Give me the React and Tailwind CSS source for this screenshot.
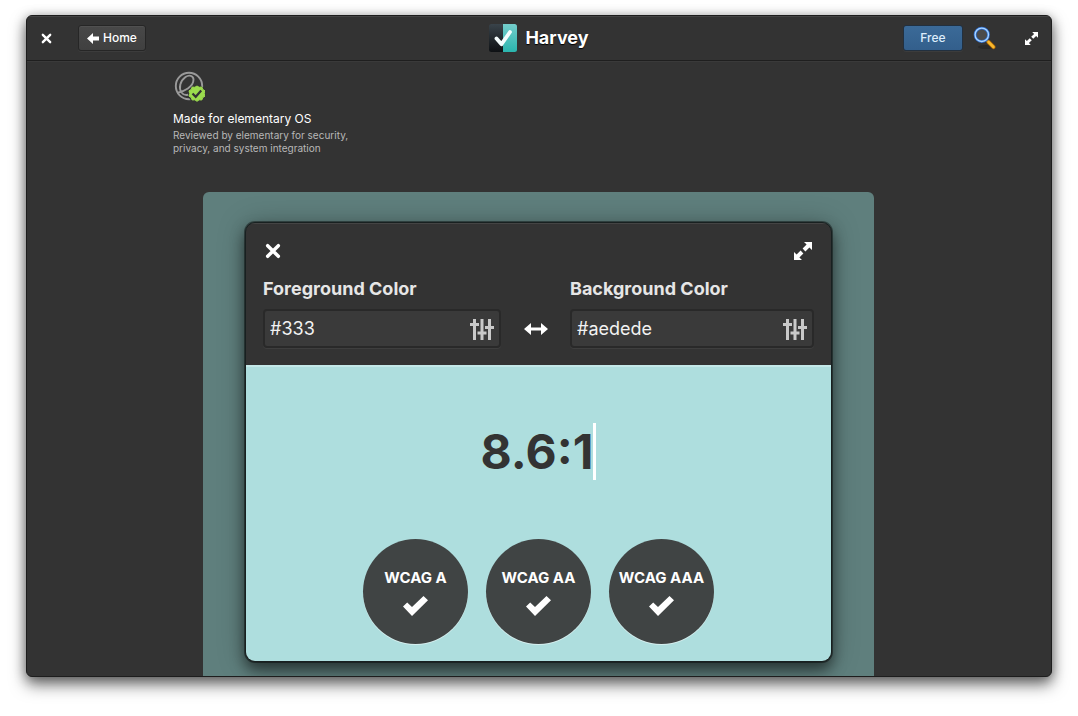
import clsx from 'clsx';

const LEVELS = ['WCAG A', 'WCAG AA', 'WCAG AAA'];

function CloseIcon({ className }) {
  return (
    <svg viewBox="0 0 12 12" className={className} aria-hidden="true">
      <path d="M2 2l8 8M10 2l-8 8" fill="none" stroke="currentColor" strokeWidth="2.6" strokeLinecap="round" />
    </svg>
  );
}

function ExpandIcon({ className }) {
  return (
    <svg viewBox="0 0 18 18" className={className} fill="currentColor" aria-hidden="true">
      <path d="M10 0h8v8l-2.6-2.6-4 4-2.8-2.8 4-4z" />
      <path d="M0 10v8h8l-2.6-2.6 4-4-2.8-2.8-4 4z" />
    </svg>
  );
}

function BackIcon() {
  return (
    <svg viewBox="0 0 12 11" className="h-[11px] w-3" fill="currentColor" aria-hidden="true">
      <path d="M0 5.5L6 0v3.5h6v4H6V11z" />
    </svg>
  );
}

function SwapIcon() {
  return (
    <svg viewBox="0 0 24 12" className="h-3 w-6" fill="currentColor" aria-hidden="true">
      <path d="M0 6l7-6v4.5h10V0l7 6-7 6V7.5H7V12z" />
    </svg>
  );
}

function SlidersIcon() {
  return (
    <svg viewBox="0 0 24 22" className="h-[22px] w-6" fill="currentColor" aria-hidden="true">
      <path d="M3 1h3v4h3v3H6v14H3V8H0V5h3z" />
      <path d="M10.500 1h3v12.500h3v3h-3V22h-3v-5.500h-3v-3h3z" />
      <path d="M18 1h3v7h3v3h-3v11h-3V11h-3V8h3z" />
    </svg>
  );
}

function CheckIcon() {
  return (
    <svg viewBox="0 0 25 20" className="h-5 w-[25px]" fill="currentColor" aria-hidden="true">
      <path d="M0 10.500L4.200 6.400 9 11 20.500 0 25 4.300 9 20z" />
    </svg>
  );
}

function HarveyLogo() {
  return (
    <svg viewBox="0 0 28 28" className="size-7" aria-hidden="true">
      <defs>
        <linearGradient id="logo-dark" x2="0" y2="1">
          <stop offset="0" stopColor="#39434a" />
          <stop offset="1" stopColor="#0e1114" />
        </linearGradient>
        <linearGradient id="logo-teal" x2="0" y2="1">
          <stop offset="0" stopColor="#74cdcb" />
          <stop offset="1" stopColor="#2ab5ae" />
        </linearGradient>
      </defs>
      <path d="M2.500 0H14v28H2.500A2.500 2.500 0 0 1 0 25.500v-23A2.500 2.500 0 0 1 2.500 0z" fill="url(#logo-dark)" />
      <path d="M14 0h11.500A2.500 2.500 0 0 1 28 2.500v23a2.500 2.500 0 0 1-2.500 2.500H14z" fill="url(#logo-teal)" />
      <path d="M7.500 14.500l5 5.700L21 8" fill="none" stroke="#f4fdfd" strokeWidth="3.800" strokeLinecap="round" strokeLinejoin="round" />
    </svg>
  );
}

function SearchIcon() {
  return (
    <svg viewBox="0 0 24 24" className="size-6" aria-hidden="true">
      <ellipse cx="13" cy="21" rx="8" ry="2" fill="#292929" />
      <path d="M13.500 14l2.500 2.500" stroke="#c8c8c8" strokeWidth="2" />
      <path d="M15.500 16l5 5" stroke="#a8660a" strokeWidth="4.200" strokeLinecap="round" />
      <path d="M15.500 16l5 5" stroke="#fbb92c" strokeWidth="2.600" strokeLinecap="round" />
      <circle cx="8.800" cy="8.800" r="6.700" fill="#4b4b4b" stroke="#2f6ed0" strokeWidth="2.800" />
      <circle cx="8.800" cy="8.800" r="6.700" fill="none" stroke="#a9d5ff" strokeWidth="1.300" />
    </svg>
  );
}

function VerifiedIcon() {
  return (
    <svg viewBox="0 0 32 32" className="size-8" fill="none" aria-hidden="true">
      <circle cx="16" cy="15" r="13.200" stroke="#999" strokeWidth="1.900" />
      <path
        d="M4 22C11 20.500 20.500 16 20.500 8.500c0-4-4.500-5-8-2.500C7 10 5.500 17 8.500 21.500c3 4 8 3 12-1"
        stroke="#999"
        strokeWidth="1.900"
      />
      <circle cx="24" cy="23" r="9" fill="#333" />
      <path
        d="M24 15l2.200 1.300 2.600-.3 1 2.400 2.200 1.500-.7 2.600.7 2.600-2.200 1.500-1 2.400-2.600-.2L24 30.300l-2.200-1.500-2.600.2-1-2.400-2.200-1.500.7-2.600-.7-2.600 2.200-1.500 1-2.400 2.600.3z"
        fill="#9bdb4d"
        stroke="#9bdb4d"
        strokeLinejoin="round"
      />
      <path d="M19.500 22.500l3.200 3.300 5.500-6.300" stroke="#333" strokeWidth="2.200" />
    </svg>
  );
}

function Header() {
  return (
    <header className="grid h-[45px] shrink-0 grid-cols-[1fr_auto_1fr] items-center border-b border-[#1f1f1f] px-3 text-white shadow-[inset_0_1px_0_#444,0_1px_0_#3a3a3a]">
      <div className="flex items-center gap-6">
        <button type="button" aria-label="Close" className="px-0.5">
          <CloseIcon className="size-[11px]" />
        </button>
        <button
          type="button"
          className="flex h-[26px] items-center gap-1 rounded-[3px] border border-[#262626] bg-linear-to-b from-[#484848] to-[#404040] px-2 text-xs font-medium shadow-[inset_0_1px_0_#505050,0_1px_0_#3c3c3c]"
        >
          <BackIcon />
          Home
        </button>
      </div>
      <div className="flex items-center gap-2">
        <HarveyLogo />
        <h1 className="text-lg font-bold text-shadow-[0_1px_1px_#000]">Harvey</h1>
      </div>
      <div className="flex items-center justify-end">
        <button
          type="button"
          className="h-[26px] w-[60px] rounded-[3px] border border-[#22303f] bg-linear-to-b from-[#3b6a98] to-[#335f8c] text-xs font-medium text-[#dcecfb] shadow-[0_1px_0_#3c3c3c]"
        >
          Free
        </button>
        <button type="button" aria-label="Search" className="mr-7 ml-2.5">
          <SearchIcon />
        </button>
        <button type="button" aria-label="Maximize" className="mr-px">
          <ExpandIcon className="size-[13px]" />
        </button>
      </div>
    </header>
  );
}

function ColorField({ id, label, value, className }) {
  return (
    <div className={clsx('min-w-0', className)}>
      <label htmlFor={id} className="block text-lg leading-6 font-bold text-[#e6e6e6]">
        {label}
      </label>
      <div className="mt-2 flex h-[39px] items-center rounded border-2 border-[#292929] bg-[#3a3a3a] px-[5px] shadow-[0_1px_0_#3e3e3e]">
        <input
          id={id}
          type="text"
          defaultValue={value}
          className="min-w-0 flex-1 bg-transparent text-lg leading-6 text-[#f2f2f2] outline-none"
        />
        <button type="button" aria-label={`Pick ${label}`} className="text-[#c9c9c9]">
          <SlidersIcon />
        </button>
      </div>
    </div>
  );
}

function ContrastWindow() {
  return (
    <div className="overflow-hidden rounded-[10px] border border-[#182020] bg-[#333] shadow-[0_0_0_1px_rgba(0,0,0,0.4),0_8px_14px_rgba(0,0,0,0.5),0_2px_28px_rgba(0,0,0,0.28)]">
      <div className="px-[17px] pt-[19px] pb-[17px] shadow-[inset_0_1px_0_#444]">
        <div className="flex items-center justify-between px-0.5 text-white">
          <button type="button" aria-label="Close preview">
            <CloseIcon className="size-4" />
          </button>
          <button type="button" aria-label="Expand preview">
            <ExpandIcon className="size-[18px]" />
          </button>
        </div>
        <div className="mt-[17px] grid grid-cols-[238fr_69px_244fr]">
          <ColorField id="foreground" label="Foreground Color" value="#333" />
          <button
            type="button"
            aria-label="Swap colors"
            className="flex h-[39px] items-center justify-center self-end text-white"
          >
            <SwapIcon />
          </button>
          <ColorField id="background" label="Background Color" value="#aedede" />
        </div>
      </div>
      <div className="flex flex-col items-center border-t-2 border-[#c3e8e8] bg-[#aedede] pt-14 pb-[17px]">
        <p className="flex items-center text-5xl leading-[57px] font-bold text-[#333]">
          8.6:1
          <span className="h-[57px] w-[3px] bg-white" />
        </p>
        <ul className="mt-[59px] flex gap-[18px]">
          {LEVELS.map((level) => (
            <li
              key={level}
              className="flex size-[105px] flex-col items-center justify-center gap-2 rounded-full bg-[#404444] text-[15px] leading-5 font-bold whitespace-nowrap text-white shadow-[0_1px_0_#d6efef]"
            >
              {level}
              <CheckIcon />
            </li>
          ))}
        </ul>
      </div>
    </div>
  );
}

export default function App() {
  return (
    <div className="h-screen bg-white px-[26px] pt-[15px] pb-[39px] font-['Inter',sans-serif]">
      <div className="flex h-full flex-col overflow-hidden rounded-md border border-[#1d1d1d] bg-[#333] shadow-[0_8px_16px_rgba(0,0,0,0.5),0_2px_12px_rgba(0,0,0,0.35)]">
        <Header />
        <main className="min-h-0 flex-1 overflow-hidden">
          <div className="mx-auto w-full max-w-[732px] pt-2.5">
            <section>
              <VerifiedIcon />
              <h2 className="mt-1.5 text-xs leading-5 text-white">Made for elementary OS</h2>
              <p className="w-48 text-[10px] leading-[13px] text-[#b8b8b8]">
                Reviewed by elementary for security, privacy, and system integration
              </p>
            </section>
            <section className="mr-[31px] ml-[30px] mt-[37px] rounded-t-md bg-[#5f7f7d] px-[42px] pt-[30px] pb-16">
              <ContrastWindow />
            </section>
          </div>
        </main>
      </div>
    </div>
  );
}
